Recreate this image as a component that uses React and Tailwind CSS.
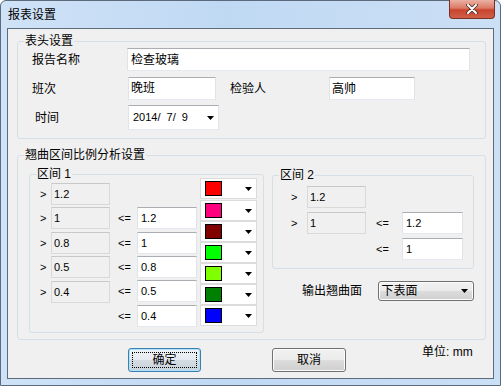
const btnFace =
  'bg-[linear-gradient(#f2f2f2_0%,#ebebeb_50%,#dddddd_50%,#cfcfcf_100%)] shadow-[inset_0_0_0_1px_#fcfcfc]';

function Arrow() {
  return (
    <svg width="7" height="4" viewBox="0 0 7 4">
      <polygon points="0,0 7,0 3.5,4" fill="#000" />
    </svg>
  );
}

function TextBox({ className, text, pad = 'pl-[3px] items-center' }) {
  return (
    <div
      className={`flex bg-white border border-x-[#dfe3ea] border-b-[#e3e9ef] border-t-[#abadb3] ${pad} ${className}`}
    >
      <span className="leading-[14px] whitespace-pre">{text}</span>
    </div>
  );
}

function ReadBox({ text, className = '' }) {
  return (
    <div
      className={`w-[59px] h-[22px] flex items-center pl-[2px] border border-[#d9d9d9] border-t-[#c9c9c9] bg-[#f0f0f0] text-[11px] ${className}`}
    >
      {text}
    </div>
  );
}

function Group({ label, className, children }) {
  return (
    <div className={`relative border border-[#d5dfe5] rounded-[3px] ${className}`}>
      <span className="absolute left-[6px] -top-[7px] px-[1px] bg-[#f0f0f0] leading-[13px]">
        {label}
      </span>
      {children}
    </div>
  );
}

const leftRows = [
  { v: '1.2', m: '' },
  { v: '1', m: 'mt-[2px]' },
  { v: '0.8', m: 'mt-[3px]' },
  { v: '0.5', m: 'mt-[2px]' },
  { v: '0.4', m: 'mt-[3px]' },
];

const leRows = [
  { v: '1.2', m: '' },
  { v: '1', m: 'mt-[3px]' },
  { v: '0.8', m: 'mt-[2px]' },
  { v: '0.5', m: 'mt-[2px]' },
  { v: '0.4', m: 'mt-[3px]' },
];

const colours = [
  { c: 'bg-[#ff0000]', m: '' },
  { c: 'bg-[#ff0080]', m: 'mt-[1px]' },
  { c: 'bg-[#800000]', m: '' },
  { c: 'bg-[#00ff00]', m: '' },
  { c: 'bg-[#80ff00]', m: '' },
  { c: 'bg-[#008000]', m: '' },
  { c: 'bg-[#0000ff]', m: '' },
];

export default function App() {
  return (
    <div className="w-[501px] h-[386px] flex flex-col rounded-t-[6px] border border-[#5c6b7b] bg-[linear-gradient(90deg,#cfe2f7_0%,#c0d9f3_45%,#cbdff5_100%)] text-black text-[12px] font-['Liberation_Sans','Noto_Sans_CJK_SC',sans-serif]">
      {/* title bar */}
      <div className="h-[27px] flex items-start justify-between">
        <span className="ml-[7px] mt-[8px] leading-[13px]">报表设置</span>
        <div className="w-[46px] h-[19px] mr-[5px] -mt-px flex items-center justify-center rounded-b-[4px] border border-t-0 border-[#7d2f24] bg-[linear-gradient(#eab1a3_0%,#dc7a66_45%,#c8432d_55%,#d0604a_100%)]">
          <svg width="12" height="10" viewBox="0 0 12 10">
            <path d="M2 1 L10 9 M10 1 L2 9" stroke="#4a2a26" strokeWidth="3.6" strokeLinecap="round" />
            <path d="M2 1 L10 9 M10 1 L2 9" stroke="#fff" strokeWidth="2" strokeLinecap="round" />
          </svg>
        </div>
      </div>

      {/* client area */}
      <div className="mx-[6px] h-[351px] border border-[#5d6c7c] bg-[#f0f0f0] flex flex-col">
        <Group label="表头设置" className="ml-[9px] mt-[12px] w-[469px] h-[98px]">
          <div className="mt-[6px] h-[23px] flex items-center">
            <span className="ml-[14px] w-[95px]">报告名称</span>
            <TextBox className="w-[343px] h-[23px]" text="检查玻璃" />
          </div>
          <div className="mt-[6px] h-[23px] flex items-center">
            <span className="ml-[14px] w-[96px]">班次</span>
            <TextBox className="w-[88px] h-[23px]" pad="pl-[2px] items-center pb-[2px]" text="晚班" />
            <span className="ml-[14px] w-[99px]">检验人</span>
            <TextBox className="w-[86px] h-[23px]" pad="pl-[2px] items-center" text="高帅" />
          </div>
          <div className="mt-[5px] h-[25px] flex items-center">
            <span className="ml-[17px] w-[93px]">时间</span>
            <div className="w-[91px] h-[25px] flex items-center justify-between pl-[4px] pr-[4px] bg-white border border-x-[#dfe3ea] border-b-[#e3e9ef] border-t-[#abadb3] text-[11px]">
              <span className="flex">
                <span>2014/</span>
                <span className="ml-[6px]">7/</span>
                <span className="ml-[6px]">9</span>
              </span>
              <Arrow />
            </div>
          </div>
        </Group>

        <Group label="翘曲区间比例分析设置" className="ml-[9px] mt-[16px] w-[469px] h-[185px] flex items-start">
          <Group label="区间 1" className="ml-[11px] mt-[18px] w-[235px] h-[159px] flex items-start">
            <div className="ml-[10px] mt-[8px] flex flex-col">
              {leftRows.map((r) => (
                <div key={r.v} className={`h-[22px] flex items-center ${r.m}`}>
                  <span className="w-[11px] text-[11px]">&gt;</span>
                  <ReadBox text={r.v} />
                </div>
              ))}
            </div>
            <div className="ml-[8px] mt-[32px] flex flex-col">
              {leRows.map((r) => (
                <div key={r.v} className={`h-[22px] flex items-center ${r.m}`}>
                  <span className="w-[19px] text-[11px]">&lt;=</span>
                  <TextBox className="w-[60px] h-[22px] text-[11px]" pad="pl-[3px] items-center" text={r.v} />
                </div>
              ))}
            </div>
            <div className="ml-[3px] mt-[3px] flex flex-col">
              {colours.map((c, i) => (
                <div
                  key={i}
                  className={`w-[57px] h-[21px] flex items-center justify-between px-[4px] bg-white border border-[#dcdcdc] ${c.m}`}
                >
                  <div className={`w-[17px] h-[15px] border border-black ${c.c}`} />
                  <Arrow />
                </div>
              ))}
            </div>
          </Group>

          <div className="ml-[8px] mt-[19px] w-[202px] flex flex-col">
            <Group label="区间 2" className="w-[202px] h-[94px]">
              <div className="ml-[18px] mt-[10px] grid grid-cols-[16px_59px_36px_61px] auto-rows-[22px] gap-y-[4px] text-[11px]">
                <span className="flex items-center">&gt;</span>
                <ReadBox text="1.2" />
                <span />
                <span />
                <span className="flex items-center">&gt;</span>
                <ReadBox text="1" />
                <span className="pl-[10px] flex items-center">&lt;=</span>
                <TextBox className="w-[61px] h-[22px]" text="1.2" />
                <span />
                <span />
                <span className="pl-[10px] flex items-center">&lt;=</span>
                <TextBox className="w-[61px] h-[22px]" text="1" />
              </div>
            </Group>
            <div className="mt-[12px] h-[20px] flex items-center">
              <span className="ml-[30px] w-[77px]">输出翘曲面</span>
              <div className={`w-[98px] h-[20px] flex items-center justify-between pl-[3px] pr-[5px] rounded-[3px] border border-[#707070] ${btnFace}`}>
                <span className="leading-[14px]">下表面</span>
                <Arrow />
              </div>
            </div>
          </div>
        </Group>

        <div className="mt-[6px] flex items-start">
          <button className="relative ml-[120px] mt-[2px] w-[73px] h-[24px] flex items-center justify-center rounded-[3px] border border-[#3c7fb1] bg-[linear-gradient(#eef3f7_0%,#e4eaef_50%,#d4dce3_50%,#c9d3dc_100%)] shadow-[inset_0_0_0_1px_#aee0f8]">
            <span className="absolute inset-[3px] border border-dotted border-black" />
            <span className="leading-[14px]">确定</span>
          </button>
          <button className={`ml-[71px] mt-[2px] w-[74px] h-[24px] flex items-center justify-center rounded-[3px] border border-[#707070] ${btnFace}`}>
            <span className="leading-[14px]">取消</span>
          </button>
          <span className="ml-[76px] leading-[12px]">单位: mm</span>
        </div>
      </div>
    </div>
  );
}
